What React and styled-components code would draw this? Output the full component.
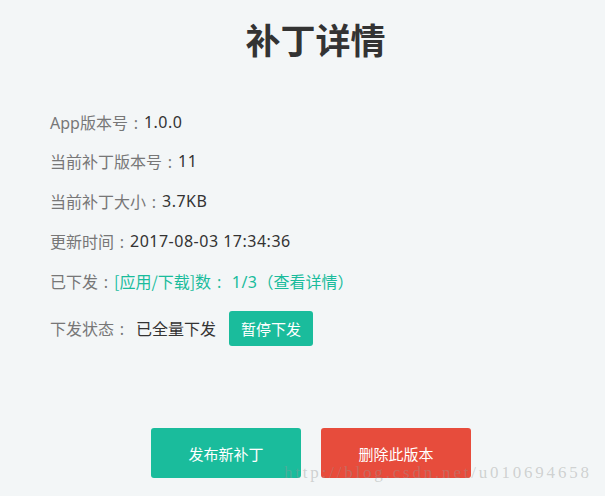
import React from "react";
import styled, { createGlobalStyle } from "styled-components";

const Global = createGlobalStyle`
  html, body { margin: 0; padding: 0; background: #f3f6f7; }
  body {
    font-family: "Noto Sans", "Noto Sans CJK SC", sans-serif;
    width: 605px; height: 496px; overflow: hidden;
  }
`;

const Page = styled.div`
  position: relative;
  width: 605px;
  height: 496px;
  background: #f3f6f7;
  box-sizing: border-box;
  padding-top: 16px;
`;

const Title = styled.h1`
  margin: 0;
  padding-left: 26px;
  text-align: center;
  font-family: "Noto Sans CJK SC", sans-serif;
  font-weight: 700;
  font-size: 35px;
  line-height: 46px;
  color: #333;
`;

const Info = styled.div`
  display: flex;
  flex-direction: column;
  padding: 40px 0 0 50px;
`;

const Row = styled.div`
  display: flex;
  align-items: center;
  height: ${(p) => p.h || 40}px;
  font-size: 16px;
  color: #333;
  white-space: pre;
`;

const Label = styled.span`
  color: #777;
  font-family: "Noto Sans", "Noto Sans CJK SC", sans-serif;
`;

const Colon = styled.span`
  display: inline-block;
  width: 16px;
  text-align: center;
  font-family: "Noto Sans", sans-serif;
  letter-spacing: 0;
`;

const Value = styled.span`
  color: ${(p) => (p.green ? "#1abc9c" : "#333")};
  margin-left: ${(p) => p.gap || 0}px;
  letter-spacing: 0.5px;
`;

const Cjk = styled.span`
  font-family: "Noto Sans CJK SC", sans-serif;
  letter-spacing: 0;
`;

const SmallButton = styled.button`
  margin-left: 13px;
  width: 84px;
  height: 35px;
  border: none;
  border-radius: 3px;
  background: #1abc9c;
  color: #fff;
  font-family: "Noto Sans CJK SC", sans-serif;
  font-size: 15px;
  padding: 0;
  cursor: pointer;
`;

const Actions = styled.div`
  display: flex;
  gap: 20px;
  padding-left: 151px;
  margin-top: 73px;
`;

const BigButton = styled.button`
  width: 150px;
  height: 50px;
  border: none;
  border-radius: 3px;
  background: ${(p) => (p.danger ? "#e74c3c" : "#1abc9c")};
  color: #fff;
  font-family: "Noto Sans CJK SC", sans-serif;
  font-size: 15px;
  padding: 0;
  cursor: pointer;
`;

const Watermark = styled.div`
  position: absolute;
  left: 284px;
  top: 463px;
  font-family: "Liberation Serif", "DejaVu Serif", serif;
  font-size: 17px;
  letter-spacing: 2.8px;
  color: rgba(150, 150, 150, 0.4);
  pointer-events: none;
`;

export default function App() {
  return (
    <>
      <Global />
      <Page>
        <Title>补丁详情</Title>
        <Info>
          <Row h={39}>
            <Label>App版本号<Colon>:</Colon></Label>
            <Value>1.0.0</Value>
          </Row>
          <Row>
            <Label>当前补丁版本号<Colon>:</Colon></Label>
            <Value>11</Value>
          </Row>
          <Row>
            <Label>当前补丁大小<Colon>:</Colon></Label>
            <Value>3.7KB</Value>
          </Row>
          <Row>
            <Label>更新时间<Colon>:</Colon></Label>
            <Value>2017-08-03 17:34:36</Value>
          </Row>
          <Row>
            <Label>已下发<Colon>:</Colon></Label>
            <Value green>
              <Cjk>[应用/下载]数<Colon>:</Colon></Cjk> 1/3<Cjk>（查看详情）</Cjk>
            </Value>
          </Row>
          <Row h={54}>
            <Label>下发状态<Colon>:</Colon></Label>
            <Value gap={6}>
              <Cjk>已全量下发</Cjk>
            </Value>
            <SmallButton>暂停下发</SmallButton>
          </Row>
        </Info>
        <Actions>
          <BigButton>发布新补丁</BigButton>
          <BigButton danger>删除此版本</BigButton>
        </Actions>
        <Watermark>http://blog.csdn.net/u010694658</Watermark>
      </Page>
    </>
  );
}
